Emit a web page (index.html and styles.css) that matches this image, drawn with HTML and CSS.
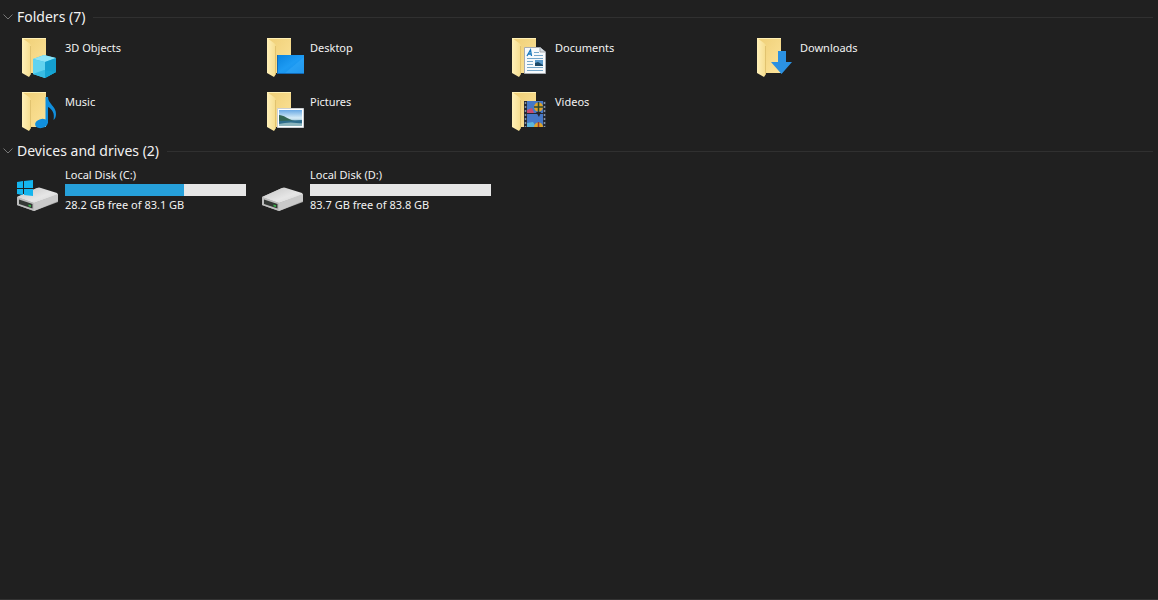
FILE: index.html
```html
<!DOCTYPE html>
<html lang="en">
<head>
<meta charset="utf-8">
<title>This PC</title>
<link rel="stylesheet" href="styles.css">
</head>
<body>
<svg class="defs" aria-hidden="true">
  <defs>
    <linearGradient id="back" x1="0" y1="0" x2="1" y2="1"><stop offset="0" stop-color="#efcf76"/><stop offset="1" stop-color="#fce39a"/></linearGradient>
    <linearGradient id="flap" x1="0" y1="0" x2="1" y2="0"><stop offset="0" stop-color="#fff0b8"/><stop offset="1" stop-color="#f5dc8c"/></linearGradient>
    <linearGradient id="screen" x1="0" y1="0" x2="1" y2="1"><stop offset="0" stop-color="#0a84e0"/><stop offset="0.5" stop-color="#1d9bf3"/><stop offset="1" stop-color="#1188e6"/></linearGradient>
    <linearGradient id="sky" x1="0" y1="0" x2="0" y2="1"><stop offset="0" stop-color="#68a8e4"/><stop offset="0.5" stop-color="#d6ecf7"/><stop offset="1" stop-color="#3e7c9c"/></linearGradient>
    <linearGradient id="top" x1="0" y1="0" x2="1" y2="1"><stop offset="0" stop-color="#c4c4c4"/><stop offset="0.6" stop-color="#e6e6e6"/><stop offset="1" stop-color="#d2d2d2"/></linearGradient>
    <symbol id="folder" viewBox="0 0 44 46">
      <path d="M6 4H30V39H13L6 36Z" fill="url(#back)"/>
      <path d="M6 4L13 9Q15 10 15 13V40L13 43L6 39Z" fill="url(#flap)"/>
      <path d="M6 4.500H30" stroke="#fff0b5"/>
      <path d="M14.500 12V40" stroke="#d9b863" stroke-width=".7"/>
    </symbol>
    <symbol id="drive" viewBox="0 0 44 46">
      <path d="M1 29L21 20L42 26V34L18 43L1 37Z" fill="#a9a9a9"/>
      <path d="M1 29L21 20Q23 19 25 20L41 25Q42 26 41 27L18 35Z" fill="url(#top)"/>
      <path d="M18 35L42 26V33L18 43Z" fill="#c9c9c9"/>
      <path d="M1 29L18 35V43L1 37Z" fill="#bdbdbd"/>
      <path d="M3 31.500L16.500 36V40.500L3 36Z" fill="#343835"/>
      <path d="M12.500 36.500L15 37.300V39L12.500 38.200Z" fill="#35b847"/>
    </symbol>
  </defs>
</svg>
<main class="explorer">
  <section class="group">
    <h2 class="group-title">
      <button class="toggle" type="button" aria-expanded="true"><svg class="chevron" viewBox="0 0 10 10" aria-hidden="true"><path d="M0.500 2.500L5 7L9.500 2.500"/></svg>Folders (7)</button>
    </h2>
    <ul class="items">
      <li class="item">
        <svg class="icon" viewBox="0 0 44 46" aria-hidden="true"><use href="#folder"/>
          <path d="M17 25L28 21L40 24V38L29 44L17 40Z" fill="#35bfe6"/><path d="M17 25L28 21L40 24L29 28Z" fill="#8ee4f7"/><path d="M17 25L29 28V44L17 40Z" fill="#62d3ef"/><path d="M29 28L40 24V38L29 44Z" fill="#149fcf"/><path d="M17 40L28 36L40 38L29 44Z" fill="#17a9d8" opacity=".55"/></svg>
        <span class="name">3D Objects</span>
      </li>
      <li class="item">
        <svg class="icon" viewBox="0 0 44 46" aria-hidden="true"><use href="#folder"/>
          <path d="M16 21H43V40H16Z" fill="#1269b5"/><path d="M17 21H43V39H17Z" fill="url(#screen)"/><path d="M43 23V39H24Z" fill="#3bb0fa" opacity=".4"/></svg>
        <span class="name">Desktop</span>
      </li>
      <li class="item">
        <svg class="icon" viewBox="0 0 44 46" aria-hidden="true"><use href="#folder"/>
          <path d="M18.500 13.500H34L39.500 18V39.500H18.500Z" fill="#f7fafc" stroke="#a8adb2"/><path d="M34 13.500V18H39.500" fill="#d8dfe5" stroke="#a8adb2"/>
          <path d="M21 22L24.500 16L25.500 22M22 20H25.500" fill="none" stroke="#1878bd" stroke-width="1.300"/>
          <path d="M28 18.500H33M28 21.500H37M21 24.500H37M21 27.500H27M21 30.500H27M21 33.500H37M21 36.500H37" stroke="#74a6c9"/><path d="M29 26H37V32H29Z" fill="#5a9acb"/><path d="M29 29L32 28L37 31V32H29Z" fill="#1c4967"/></svg>
        <span class="name">Documents</span>
      </li>
      <li class="item">
        <svg class="icon" viewBox="0 0 44 46" aria-hidden="true"><use href="#folder"/>
          <path d="M27 17H35V28H41L30.500 40L20 28H27Z" fill="#2b91e2"/></svg>
        <span class="name">Downloads</span>
      </li>
      <li class="item">
        <svg class="icon" viewBox="0 0 44 46" aria-hidden="true"><use href="#folder"/>
          <ellipse cx="25.500" cy="35.500" rx="6.500" ry="4.500" transform="rotate(-15 25.500 35.500)" fill="#118fdd"/><path d="M29.500 9H32C32 16 40 18 40 26C40 29 39 31 37.500 32C39 25 36 21 32 19V35H29.500Z" fill="#118fdd"/></svg>
        <span class="name">Music</span>
      </li>
      <li class="item">
        <svg class="icon" viewBox="0 0 44 46" aria-hidden="true"><use href="#folder"/>
          <path d="M16.500 20.500H42.500V39.500H16.500Z" fill="#fff" stroke="#cbd0d4"/><path d="M18 22H41V38H18Z" fill="url(#sky)"/><path d="M18 27C23 27 26 31 34 33H18Z" fill="#336653"/><path d="M18 33L41 32V35L18 36Z" fill="#2e6d8c"/><path d="M18 36Q30 33 41 36V38H18Z" fill="#8bb4bd"/></svg>
        <span class="name">Pictures</span>
      </li>
      <li class="item">
        <svg class="icon" viewBox="0 0 44 46" aria-hidden="true"><use href="#folder"/>
          <path d="M18 13H40V39H18Z" fill="#252933"/><path d="M21 13H37V25H21ZM21 26H37V39H21Z" fill="#4678c7"/>
          <path d="M19.500 14V39M38.500 14V39" stroke="#8793a2" stroke-width="1.500" stroke-dasharray="2 2"/>
          <path d="M21 22L26 20L28 25H21Z" fill="#c64c70"/><circle cx="32.500" cy="19" r="4.500" fill="#dfa329"/><path d="M28 19H37M32.500 14V24" stroke="#2c4931" stroke-width="1.500"/><path d="M30 24H35L33 29Z" fill="#28252c"/><path d="M21 35L27 34L30 39H21Z" fill="#5bb5dc"/><path d="M28 39A4.500 4.500 0 0 1 37 39Z" fill="#dfa329"/><path d="M32.500 34V39" stroke="#983b32" stroke-width="1.500"/></svg>
        <span class="name">Videos</span>
      </li>
    </ul>
  </section>
  <section class="group">
    <h2 class="group-title">
      <button class="toggle" type="button" aria-expanded="true"><svg class="chevron" viewBox="0 0 10 10" aria-hidden="true"><path d="M0.500 2.500L5 7L9.500 2.500"/></svg>Devices and drives (2)</button>
    </h2>
    <ul class="items">
      <li class="item">
        <svg class="icon" viewBox="0 0 44 46" aria-hidden="true"><use href="#drive"/><path d="M1 14L7 13V20H1ZM8 13L17 12V20H8ZM1 21H7V27L1 26ZM8 21H17V28L8 27Z" fill="#14b5ee"/></svg>
        <div class="drive">
          <span class="label">Local Disk (C:)</span>
          <div class="meter" role="img" aria-label="Space used"><div class="used" style="width: 66%"></div></div>
          <span class="label">28.2 GB free of 83.1 GB</span>
        </div>
      </li>
      <li class="item">
        <svg class="icon" viewBox="0 0 44 46" aria-hidden="true"><use href="#drive"/></svg>
        <div class="drive">
          <span class="label">Local Disk (D:)</span>
          <div class="meter" role="img" aria-label="Space used"><div class="used" style="width: 0%"></div></div>
          <span class="label">83.7 GB free of 83.8 GB</span>
        </div>
      </li>
    </ul>
  </section>
</main>
</body>
</html>
```
FILE: styles.css
```css
* {
  box-sizing: border-box;
}

body {
  margin: 0;
  min-height: 100vh;
  background: #202020;
  border-bottom: 1px solid #333;
  color: #f2f2f2;
  font-family: "Noto Sans", "Open Sans", sans-serif;
  font-size: 11px;
  line-height: 14px;
}

.defs {
  position: absolute;
  width: 0;
  height: 0;
}

.group-title {
  display: flex;
  align-items: center;
  gap: 8px;
  height: 34px;
  margin: 0;
  padding: 0 5px 0 3px;
}

.group-title::after {
  content: "";
  flex: 1;
  height: 1px;
  background: #303030;
}

.toggle {
  display: flex;
  align-items: center;
  gap: 4px;
  padding: 0;
  border: 0;
  background: none;
  color: inherit;
  font: 14px/20px "Noto Sans", "Open Sans", sans-serif;
}

.chevron {
  width: 10px;
  height: 10px;
  fill: none;
  stroke: #777;
}

.items {
  display: grid;
  grid-template-columns: repeat(auto-fill, 245px);
  row-gap: 8px;
  margin: 0;
  padding: 0 0 0 16px;
  list-style: none;
}

.item {
  display: flex;
  gap: 5px;
}

.icon {
  flex: none;
  width: 44px;
  height: 46px;
}

.name {
  padding-top: 7px;
}

.drive {
  display: flex;
  flex-direction: column;
  width: 181px;
}

.meter {
  height: 12px;
  margin: 2px 0;
  background: #e6e6e6;
}

.used {
  height: 100%;
  background: #26a0da;
}
```
